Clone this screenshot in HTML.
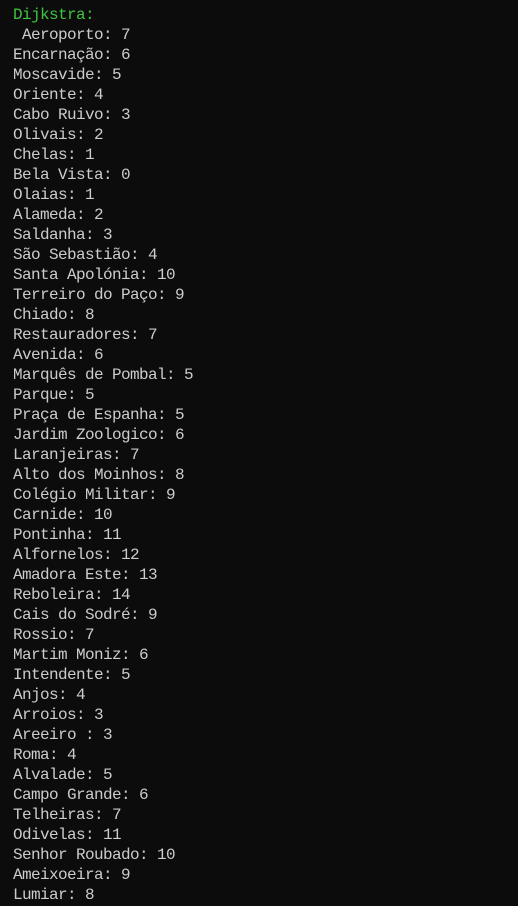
<!DOCTYPE html>
<html><head><meta charset="utf-8"><style>
html,body{margin:0;background:#0c0c0c;width:518px;height:906px;overflow:hidden}
pre{margin:0;padding:5px 0 0 13px;font-family:"Liberation Mono",monospace;font-size:16px;letter-spacing:-0.6px;line-height:20px;color:#cccccc}
.g{color:#3fc43f}
</style></head><body><pre><span class="g">Dijkstra:</span>
 Aeroporto: 7
Encarnação: 6
Moscavide: 5
Oriente: 4
Cabo Ruivo: 3
Olivais: 2
Chelas: 1
Bela Vista: 0
Olaias: 1
Alameda: 2
Saldanha: 3
São Sebastião: 4
Santa Apolónia: 10
Terreiro do Paço: 9
Chiado: 8
Restauradores: 7
Avenida: 6
Marquês de Pombal: 5
Parque: 5
Praça de Espanha: 5
Jardim Zoologico: 6
Laranjeiras: 7
Alto dos Moinhos: 8
Colégio Militar: 9
Carnide: 10
Pontinha: 11
Alfornelos: 12
Amadora Este: 13
Reboleira: 14
Cais do Sodré: 9
Rossio: 7
Martim Moniz: 6
Intendente: 5
Anjos: 4
Arroios: 3
Areeiro : 3
Roma: 4
Alvalade: 5
Campo Grande: 6
Telheiras: 7
Odivelas: 11
Senhor Roubado: 10
Ameixoeira: 9
Lumiar: 8</pre></body></html>
